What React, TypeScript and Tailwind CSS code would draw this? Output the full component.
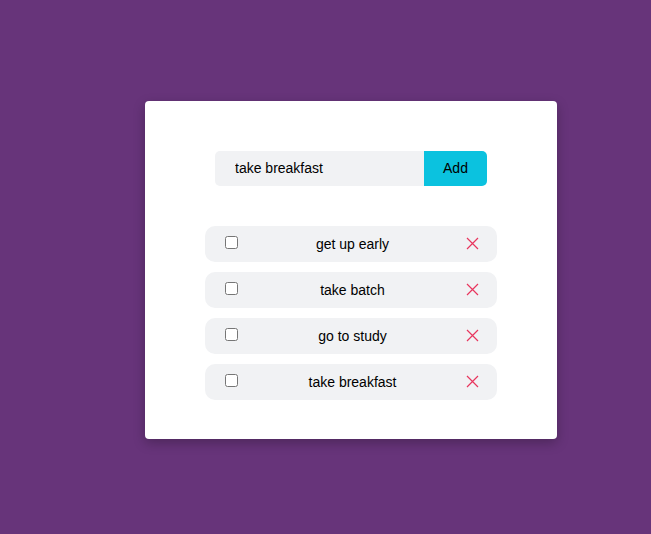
import React from 'react';

const todos = ['get up early', 'take batch', 'go to study', 'take breakfast'];

const CloseIcon: React.FC = () => (
  <svg width="13" height="13" viewBox="0 0 13 13" fill="none" stroke="#e8365e" strokeWidth="1.2">
    <path d="M1 1 L12 12 M12 1 L1 12" />
  </svg>
);

const App: React.FC = () => {
  return (
    <div className="min-h-[534px] w-full bg-[#67347a] pt-[101px] pl-[145px] font-['Liberation_Sans',Arial,sans-serif]">
      <div className="w-[412px] h-[338px] bg-white rounded-[4px] shadow-[0_4px_12px_rgba(0,0,0,0.25)] pt-[50px] flex flex-col items-center">
        <div className="flex w-[272px] h-[35px]">
          <input
            defaultValue="take breakfast"
            className="flex-1 min-w-0 bg-[#f1f2f4] rounded-l-[5px] pl-[20px] text-[14px] text-black outline-none"
          />
          <button className="w-[63px] bg-[#0bc2df] rounded-r-[5px] text-[14px] text-black">Add</button>
        </div>
        <ul className="mt-[40px] flex flex-col gap-[10px]">
          {todos.map((t) => (
            <li key={t} className="w-[292px] h-[36px] bg-[#f1f2f4] rounded-[10px] flex items-center pl-[19px] pr-[18px]">
              <input type="checkbox" className="w-[13px] h-[13px] mx-[1px] mt-0 mb-[4px]" />
              <span className="flex-1 text-center text-[14px] text-black">{t}</span>
              <button className="flex items-center mb-[1px]"><CloseIcon /></button>
            </li>
          ))}
        </ul>
      </div>
    </div>
  );
};

export default App;
